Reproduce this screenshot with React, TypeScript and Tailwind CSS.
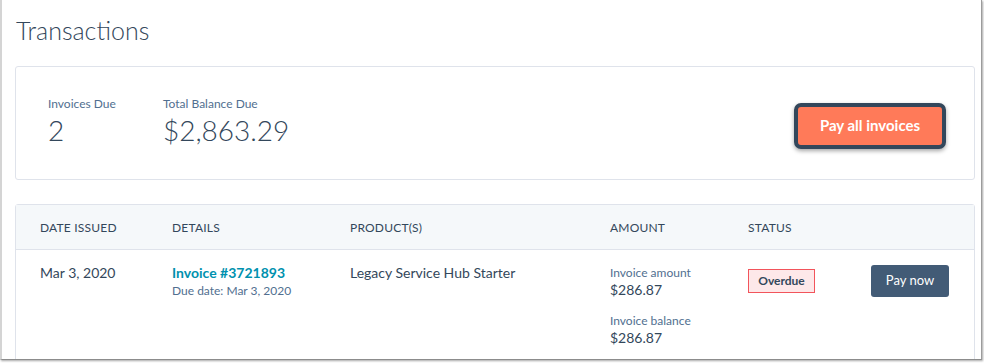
import React from "react";

export default function App() {
  return (
    <div className="w-[984px] h-[363px] bg-white overflow-hidden" style={{ fontFamily: "Lato, 'Open Sans', sans-serif" }}>
      <div className="w-[982px] h-[360px] bg-white border-l-2 border-l-[#d4d4d4] border-r border-b border-r-[#9c9c9c] border-b-[#8c8c8c] shadow-[1px_1px_2px_rgba(0,0,0,0.35)] overflow-hidden">
        <div className="pl-[13px] pr-[6px] text-[#33475b]">
          <h1 className="pt-[15px] pl-[1px] text-[25px] leading-[30px] font-light text-[#33475b]">Transactions</h1>

          <div className="mt-[21px] w-[960px] h-[114px] border border-[#dfe3eb] rounded-[3px] flex items-center justify-between pl-[32px] pr-[28px]">
            <div className="flex mt-[-3px]">
              <div className="w-[115px]">
                <div className="text-[12px] leading-[16px] text-[#516f90]">Invoices Due</div>
                <div className="text-[28px] leading-[36px] font-light">2</div>
              </div>
              <div>
                <div className="text-[12px] leading-[16px] text-[#516f90]">Total Balance Due</div>
                <div className="text-[28px] leading-[36px] font-light">$2,863.29</div>
              </div>
            </div>
            <button className="mt-[5px] w-[152px] h-[46px] rounded-[7px] border-[4px] border-[#33475b] bg-[#ff7a59] text-white text-[15px] font-bold shadow-[0_2px_4px_rgba(0,0,0,0.35)]">
              Pay all invoices
            </button>
          </div>

          <div className="mt-[24px] w-[960px] border border-[#dfe3eb] rounded-t-[3px] h-[200px]">
            <div className="grid grid-cols-[132px_178px_260px_138px_1fr] pl-[24px] h-[45px] items-center bg-[#f5f8fa] border-b border-[#dfe3eb] text-[12px] uppercase tracking-[0.2px] text-[#33475b]">
              <div className="pt-[1px]">Date issued</div>
              <div className="pt-[1px]">Details</div>
              <div className="pt-[1px]">Product(s)</div>
              <div className="pt-[1px]">Amount</div>
              <div className="pt-[1px]">Status</div>
            </div>
            <div className="grid grid-cols-[132px_178px_260px_138px_1fr] pl-[24px] pt-[13px] items-start">
              <div className="text-[14px] leading-[20px]">Mar 3, 2020</div>
              <div>
                <div className="text-[14px] leading-[20px] font-bold text-[#0091ae]">Invoice #3721893</div>
                <div className="text-[12px] leading-[16px] text-[#516f90]">Due date: Mar 3, 2020</div>
              </div>
              <div className="text-[14px] leading-[20px]">Legacy Service Hub Starter</div>
              <div>
                <div className="text-[12px] leading-[16px] mt-[2px] text-[#516f90]">Invoice amount</div>
                <div className="text-[14px] leading-[18px]">$286.87</div>
                <div className="text-[12px] leading-[16px] mt-[14px] text-[#516f90]">Invoice balance</div>
                <div className="text-[14px] leading-[18px]">$286.87</div>
              </div>
              <div className="flex justify-between pr-[25px]">
                <span className="mt-[6px] h-[24px] w-[67px] flex items-center justify-center border border-[#f2545b] bg-[#fde8e9] text-[12px] font-bold text-[#33475b]">
                  Overdue
                </span>
                <button className="mt-[2px] w-[78px] h-[32px] rounded-[3px] bg-[#425b76] text-white text-[13px]">
                  Pay now
                </button>
              </div>
            </div>
          </div>
        </div>
      </div>
    </div>
  );
}
